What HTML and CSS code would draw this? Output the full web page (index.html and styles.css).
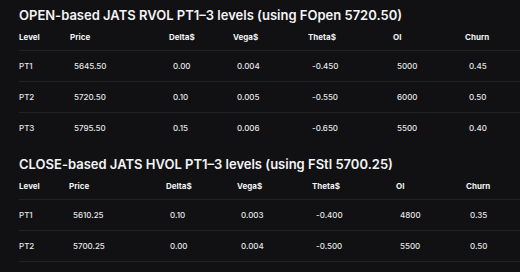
FILE: index.html
```html
<!DOCTYPE html>
<html>
<head>
<meta charset="utf-8">
<link rel="stylesheet" href="styles.css">
</head>
<body>
<div class="page">
  <section class="block">
    <h2 class="title">OPEN-based JATS RVOL PT1–3 levels (using FOpen 5720.50)</h2>
    <table class="grid">
      <colgroup>
        <col class="c-level1"><col class="c-price1"><col class="c-delta1"><col class="c-vega1"><col class="c-theta1"><col class="c-oi1"><col>
      </colgroup>
      <thead>
        <tr><th>Level</th><th>Price</th><th>Delta$</th><th>Vega$</th><th>Theta$</th><th>OI</th><th>Churn</th></tr>
      </thead>
      <tbody>
        <tr><td>PT1</td><td>5645.50</td><td>0.00</td><td>0.004</td><td>-0.450</td><td>5000</td><td>0.45</td></tr>
        <tr><td>PT2</td><td>5720.50</td><td>0.10</td><td>0.005</td><td>-0.550</td><td>6000</td><td>0.50</td></tr>
        <tr><td>PT3</td><td>5795.50</td><td>0.15</td><td>0.006</td><td>-0.650</td><td>5500</td><td>0.40</td></tr>
      </tbody>
    </table>
  </section>
  <section class="block">
    <h2 class="title">CLOSE-based JATS HVOL PT1–3 levels (using FStl 5700.25)</h2>
    <table class="grid">
      <colgroup>
        <col class="c-level2"><col class="c-price2"><col class="c-delta2"><col class="c-vega2"><col class="c-theta2"><col class="c-oi2"><col>
      </colgroup>
      <thead>
        <tr><th>Level</th><th>Price</th><th>Delta$</th><th>Vega$</th><th>Theta$</th><th>OI</th><th>Churn</th></tr>
      </thead>
      <tbody>
        <tr><td>PT1</td><td>5610.25</td><td>0.10</td><td>0.003</td><td>-0.400</td><td>4800</td><td>0.35</td></tr>
        <tr><td>PT2</td><td>5700.25</td><td>0.00</td><td>0.004</td><td>-0.500</td><td>5500</td><td>0.50</td></tr>
        <tr><td>PT3</td><td>5790.25</td><td>-0.10</td><td>0.005</td><td>-0.600</td><td>6200</td><td>0.45</td></tr>
      </tbody>
    </table>
  </section>
</div>
</body>
</html>
```

FILE: styles.css
```css
html, body {
  margin: 0;
  padding: 0;
  background: #111113;
}
body {
  font-family: Inter, "Liberation Sans", sans-serif;
  color: #ececee;
  overflow: hidden;
}
.page {
  padding: 7px 0 0 19px;
}
.block + .block {
  margin-top: 13px;
}
.title {
  margin: 0;
  font-size: 13px;
  line-height: 16px;
  font-weight: 600;
  color: #f4f4f6;
  white-space: nowrap;
}
.grid {
  border-collapse: collapse;
  table-layout: fixed;
  width: 501px;
  margin-top: 1px;
}
.grid th {
  height: 25px;
  padding: 0 0 1px 0;
  text-align: left;
  font-size: 8px;
  font-weight: 700;
  color: #f2f2f4;
  border-bottom: 1px solid #222226;
  vertical-align: middle;
}
.grid td {
  height: 30px;
  padding: 0 0 0 4px;
  font-size: 8px;
  font-weight: 500;
  color: #e6e6e8;
  vertical-align: middle;
  border-bottom: 1px solid #222226;
}
.grid td:first-child {
  padding-left: 0;
}
.grid tbody tr:last-child td {
  border-bottom: none;
}
.c-level1 { width: 51px; }
.c-price1 { width: 99px; }
.c-delta1 { width: 64px; }
.c-vega1 { width: 75px; }
.c-theta1 { width: 85px; }
.c-oi1 { width: 72px; }
.c-level2 { width: 50px; }
.c-price2 { width: 97px; }
.c-delta2 { width: 71px; }
.c-vega2 { width: 75px; }
.c-theta2 { width: 84px; }
.c-oi2 { width: 70px; }
```
